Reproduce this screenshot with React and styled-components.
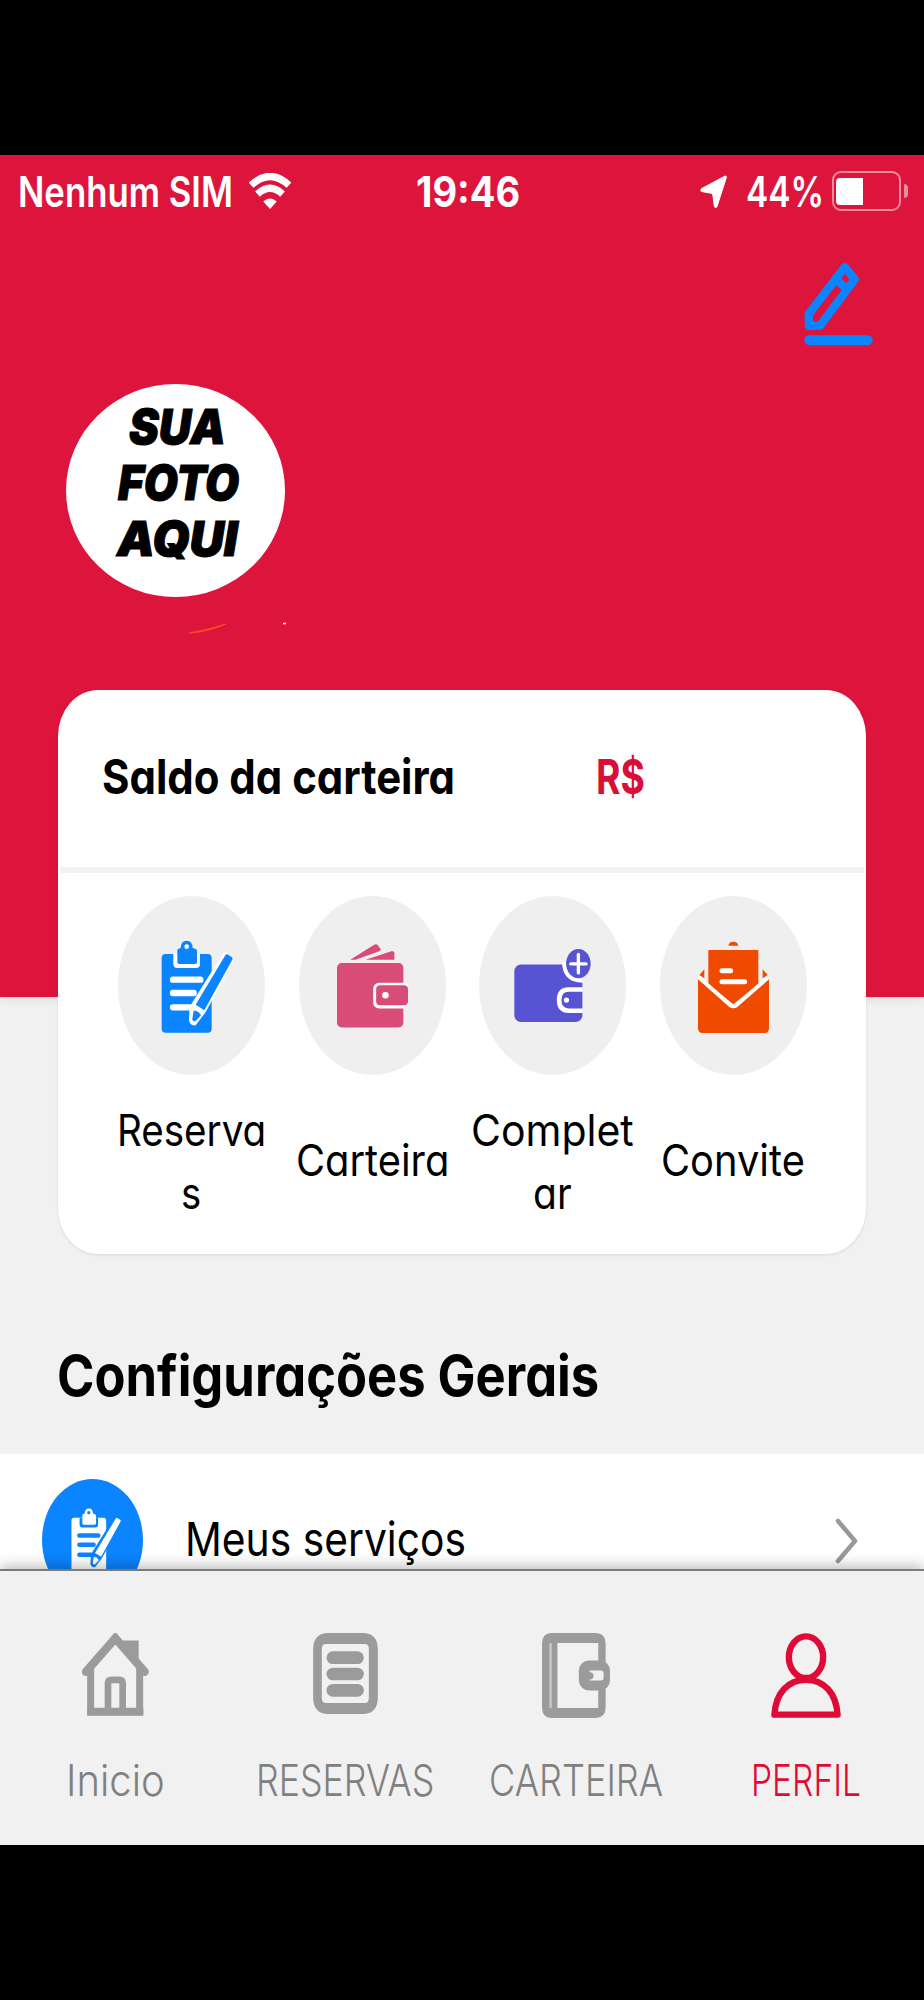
import React, { useLayoutEffect, useRef, useState } from 'react'
import styled, { createGlobalStyle } from 'styled-components'

const red = '#dd143c'
const grey = '#f1f1f1'
const blue = '#0a84ff'

const GlobalStyle = createGlobalStyle`
  body {
    margin: 0;
    background: #000;
    font-family: Inter, "Open Sans", sans-serif;
  }
`

const Screen = styled.div`
  display: flex;
  flex-direction: column;
  box-sizing: border-box;
  width: 924px;
  height: 2000px;
  padding: 155px 0;
  background-color: #000;
  overflow: hidden;
`

const Content = styled.main`
  flex: 1;
  min-height: 0;
  overflow: hidden;
  background-color: ${grey};
`

const Header = styled.header`
  box-sizing: border-box;
  height: 842px;
  background-color: ${red};
  box-shadow: 0 2px 8px rgba(0, 0, 0, 0.1);
`

const StatusBar = styled.div`
  display: grid;
  grid-template-columns: 398px 1fr 226px;
  align-items: center;
  height: 72px;
  padding: 0 16px 0 18px;
  color: #fff;
`

const StatusGroup = styled.div`
  display: flex;
  align-items: center;
  gap: ${({ gap }) => gap || 0}px;
`

const Battery = styled.div`
  display: flex;
  align-items: center;
  margin-left: 8px;
`

const BatteryBody = styled.div`
  box-sizing: border-box;
  width: 69px;
  height: 40px;
  padding: 4px 2px;
  border: 2px solid #f58a9f;
  border-radius: 9px;
`

const BatteryLevel = styled.div`
  width: 27px;
  height: 27px;
  margin-top: 1px;
  border-radius: 4px 0 0 4px;
  background-color: #fff;
`

const BatteryTip = styled.div`
  width: 4px;
  height: 14px;
  margin-left: 3px;
  border-radius: 0 5px 5px 0;
  background-color: #f58a9f;
`

const EditRow = styled.div`
  display: flex;
  justify-content: flex-end;
  padding: 35px 51px 0 0;
`

const Profile = styled.div`
  position: relative;
  padding: 38px 0 0 66px;
`

const Avatar = styled.div`
  display: flex;
  flex-direction: column;
  align-items: center;
  box-sizing: border-box;
  width: 219px;
  height: 213px;
  padding-top: 15px;
  border-radius: 50%;
  background-color: #fff;
  color: #000;
  -webkit-text-stroke: 1px #000;
`

const AvatarLine = styled.div`
  height: 56px;
  margin-left: ${({ shift }) => shift || 0}px;
`

const Specks = styled.svg`
  position: absolute;
  left: 0;
  top: 0;
  pointer-events: none;
`

const Card = styled.section`
  position: relative;
  box-sizing: border-box;
  width: 808px;
  height: 564px;
  margin: -307px auto 0;
  border-radius: 40px / 46px;
  background-color: #fff;
  box-shadow: 0 1px 3px rgba(0, 0, 0, 0.1);
`

const Balance = styled.div`
  display: flex;
  align-items: center;
  box-sizing: border-box;
  height: 183px;
  margin: 0 2px;
  padding: 0 0 3px 42px;
  border-bottom: 6px solid #f2f2f2;
`

const BalanceLabel = styled.div`
  width: 494px;
`

const Currency = styled.div`
  color: #d80f36;
`

const Actions = styled.div`
  display: grid;
  grid-template-columns: repeat(4, 180.7px);
  margin-left: 43px;
  padding-top: 23px;
`

const Action = styled.div`
  display: flex;
  flex-direction: column;
  align-items: center;
`

const ActionCircle = styled.div`
  display: flex;
  align-items: center;
  justify-content: center;
  width: 147px;
  height: 179px;
  border-radius: 50%;
  background-color: #efefef;
`

const IconShift = styled.div`
  display: flex;
  transform: translate(${({ x }) => x || 0}px, ${({ y }) => y || 0}px);
`

const ActionLabel = styled.div`
  display: flex;
  flex-direction: column;
  align-items: center;
  justify-content: center;
  box-sizing: border-box;
  height: 126px;
  margin-top: 24px;
  padding-bottom: ${({ single }) => (single ? 4 : 0)}px;
`

const SectionTitle = styled.h2`
  height: 70px;
  margin: 86px 0 0 57px;
  font-weight: normal;
`

const ServiceRow = styled.div`
  display: flex;
  align-items: flex-start;
  height: 200px;
  margin-top: 44px;
  background-color: #fff;
`

const ServiceCircle = styled.div`
  display: flex;
  align-items: center;
  justify-content: center;
  width: 101px;
  height: 122px;
  margin: 25px 42px 0;
  border-radius: 50%;
  background-color: ${blue};
`

const ServiceName = styled.div`
  flex: 1;
  margin-top: 50px;
`

const Chevron = styled.svg`
  margin: 64px 65px 0 0;
`

const TabBar = styled.nav`
  position: relative;
  display: grid;
  grid-template-columns: repeat(4, 1fr);
  box-sizing: border-box;
  height: 276px;
  padding-right: 3px;
  border-top: 2px solid #7b7b7b;
  background-color: ${grey};
  box-shadow: 0 -2px 14px rgba(0, 0, 0, 0.3);
`

const Tab = styled.div`
  display: flex;
  flex-direction: column;
  align-items: center;
  padding-top: 62px;
  color: ${({ active }) => (active ? '#df0a35' : '#808080')};
`

const TabIcon = styled.div`
  display: flex;
  align-items: flex-start;
  height: 85px;
  margin-bottom: 32px;
`

const TextBox = styled.span`
  display: block;
  width: ${({ width }) => width}px;
  height: ${({ line }) => line}px;
`

const TextRun = styled.span`
  display: inline-block;
  font-size: ${({ size }) => size}px;
  font-weight: ${({ weight }) => weight};
  font-style: ${({ italic }) => (italic ? 'italic' : 'normal')};
  font-feature-settings: ${({ round }) => (round ? '"cv11"' : 'normal')};
  line-height: ${({ line }) => line}px;
  white-space: nowrap;
  transform-origin: 0 50%;
`

// squeezes a run of text horizontally until it takes exactly `width`
const FitText = ({ children, width, size, line, weight = 400, italic = false, round = true }) => {
  const run = useRef(null)
  const [scale, setScale] = useState(1)

  useLayoutEffect(() => {
    setScale(width / run.current.offsetWidth)
  }, [children, width])

  return (
    <TextBox width={width} line={line}>
      <TextRun
        ref={run}
        size={size}
        line={line}
        weight={weight}
        italic={italic}
        round={round}
        style={{ transform: `scaleX(${scale})` }}
      >
        {children}
      </TextRun>
    </TextBox>
  )
}

const WifiIcon = () => (
  <svg width="42" height="36" viewBox="0 0 124 106" fill="none" stroke="#fff" strokeWidth="21">
    <path d="M6 36 Q62 -16 118 36" />
    <path d="M25 62 Q62 28 99 62" />
    <path d="M42 84 Q62 67 82 84 L62 106 Z" fill="#fff" stroke="none" />
  </svg>
)

const LocationIcon = () => (
  <svg width="27" height="33" viewBox="0 0 79 98">
    <path d="M4 41 L72 4 Q79 1 77 9 L50 93 Q46 100 42 92 L37 55 L5 49 Q0 46 4 41 Z" fill="#fff" stroke="#fff" strokeWidth="3" />
  </svg>
)

const EditIcon = () => (
  <svg width="69" height="84" viewBox="0 0 208 251" fill="none" stroke={blue} strokeWidth="25" strokeLinejoin="round">
    <path d="M123 14 L153 51 L49 190 L15 192 L14 156 Z" />
    <path d="M96 50 L131 82" />
    <path d="M16 235 H192" strokeWidth="30" strokeLinecap="round" />
  </svg>
)

const ClipboardIcon = ({ width, color, detail }) => (
  <svg width={width} height={width * 1.287} viewBox="0 0 216 278">
    <rect x="2" y="42" width="150" height="236" rx="12" fill={color} />
    <path d="M37 42 V72 Q37 84 49 84 H105 Q117 84 117 72 V42 Z" fill={detail} />
    <path d="M49 32 Q49 26 59 24 Q60 2 77 2 Q94 2 95 24 Q107 26 108 32 V66 Q108 72 102 72 H55 Q49 72 49 66 Z" fill={color} />
    <circle cx="77" cy="20" r="7" fill={detail} />
    <path d="M36 119 H118 M36 159 H98 M36 202 H86" stroke={detail} strokeWidth="19" strokeLinecap="round" />
    <path d="M190 34 L222 56 L134 216 L104 256 Q86 258 84 240 L86 200 Z" fill={detail} />
    <path d="M193 46 Q196 40 202 44 L212 51 Q217 55 213 61 L130 211 L104 194 Z" fill={color} />
    <path d="M98 212 L94 238 Q96 246 104 243 L120 226 Q114 212 98 212 Z" fill={color} />
  </svg>
)

const CashWalletIcon = () => (
  <svg width="71" height="85" viewBox="0 0 214 255" fill="#d94c78">
    <path d="M40 50 L112 5 Q118 2 122 5 L132 18 Q132 23 127 24 L56 50 Z" />
    <path d="M86 50 L164 24 Q171 23 173 29 V50 Z" />
    <rect y="60" width="200" height="194" rx="14" />
    <rect x="109" y="119" width="110" height="78" rx="18" fill="#fff" />
    <rect x="118" y="127" width="96" height="60" rx="12" />
    <circle cx="146" cy="157" r="10" fill="#fff" />
  </svg>
)

const AddWalletIcon = () => (
  <svg width="77" height="73" viewBox="0 0 230 220" fill="#5753d3">
    <rect y="47" width="205" height="173" rx="20" />
    <path d="M144 40 Q144 100 206 102 V40 Z" fill="#fff" />
    <path d="M154 30 Q156 84 206 91 V30 Z" fill="#efefef" />
    <ellipse cx="193" cy="44" rx="37" ry="44" />
    <path d="M193 16 V72 M170 45 H216" stroke="#fff" strokeWidth="10" strokeLinecap="round" />
    <path d="M206 122 H164 Q135 122 135 154 Q135 186 164 186 H206" fill="none" stroke="#fff" strokeWidth="14" />
    <circle cx="157" cy="154" r="8" fill="#fff" />
  </svg>
)

const InviteIcon = () => (
  <svg width="71" height="92" viewBox="0 0 213 276" fill="#f04a00">
    <path d="M91 14 Q93 2 106 2 Q119 2 121 14 Z" />
    <path d="M31 27 H181 V130 L106 190 L31 130 Z" />
    <path d="M4 102 L19 85 V112 Z M209 102 L194 85 V112 Z" />
    <path d="M0 112 L106 202 L213 112 V262 Q213 276 199 276 H14 Q0 276 0 262 Z" />
    <path d="M1 108 L96 192 Q106 199 116 192 L212 108" fill="none" stroke="#fff" strokeWidth="12" />
    <path d="M72 89 H98 M72 122 H140" stroke="#fff" strokeWidth="15" strokeLinecap="round" />
  </svg>
)

const HomeIcon = () => (
  <svg width="67" height="83" viewBox="0 0 201 248" fill="none" stroke="#9b9b9b">
    <path d="M12 116 L100 15 L188 116" strokeWidth="25" strokeLinecap="round" />
    <path d="M26 104 V236 H173 V104" strokeWidth="21" />
    <path d="M16 236 H184" strokeWidth="24" />
    <path d="M78 236 V150 Q78 140 88 140 H112 Q122 140 122 150 V236" strokeWidth="20" />
    <path d="M122 22 H170 V92 Z" fill="#9b9b9b" stroke="none" />
  </svg>
)

const ListIcon = () => (
  <svg width="65" height="81" viewBox="0 0 194 243" fill="#9b9b9b">
    <path
      fillRule="evenodd"
      d="M42 0 H152 Q194 2 194 50 V193 Q194 241 152 243 H42 Q0 241 0 193 V50 Q0 2 42 0 Z M38 33 Q26 33 26 47 V196 Q26 210 38 210 H155 Q167 210 167 196 V47 Q167 33 155 33 Z"
    />
    <rect x="40" y="55" width="112" height="38" rx="19" />
    <rect x="40" y="104" width="112" height="38" rx="19" />
    <rect x="40" y="153" width="112" height="38" rx="19" />
  </svg>
)

const WalletIcon = () => (
  <svg width="68" height="85" viewBox="0 0 203 254" fill="#9b9b9b">
    <path
      fillRule="evenodd"
      d="M26 0 H162 Q190 2 190 32 V222 Q190 252 162 254 H26 Q0 252 0 222 V32 Q0 2 26 0 Z M46 30 V224 H168 V30 Z"
    />
    <rect x="22" y="30" width="7" height="194" fill="#c9c9c9" />
    <rect x="110" y="82" width="93" height="90" rx="30" />
    <path d="M142 112 H176 Q184 112 184 120 V134 Q184 142 176 142 H142 Z" fill={grey} />
    <circle cx="143" cy="128" r="11" />
  </svg>
)

const UserIcon = () => (
  <svg width="70" height="85" viewBox="0 0 208 253" fill="none" stroke="#df0a35" strokeWidth="19">
    <ellipse cx="104" cy="72" rx="51" ry="62" />
    <path d="M10 243 C14 180 50 139 104 139 C158 139 194 180 198 243 Z" strokeLinejoin="round" />
  </svg>
)

const actions = [
  { lines: [['Reserva', 149], ['s', 20]], icon: <ClipboardIcon width={72} color={blue} detail="#fff" />, x: 6, y: 1 },
  { lines: [['Carteira', 153]], icon: <CashWalletIcon />, x: 0, y: 0 },
  { lines: [['Complet', 163], ['ar', 39]], icon: <AddWalletIcon />, x: 0, y: 0 },
  { lines: [['Convite', 144]], icon: <InviteIcon />, x: 0, y: 1 }
]

const tabs = [
  { label: 'Inicio', width: 99, icon: <HomeIcon /> },
  { label: 'RESERVAS', width: 178, icon: <ListIcon /> },
  { label: 'CARTEIRA', width: 174, icon: <WalletIcon /> },
  { label: 'PERFIL', width: 110, icon: <UserIcon />, active: true }
]

const App = () => (
  <Screen>
    <GlobalStyle />
    <Content>
      <Header>
        <StatusBar>
          <StatusGroup gap={16}>
            <FitText width={215} size={42} line={51} weight={600} round={false}>Nenhum SIM</FitText>
            <WifiIcon />
          </StatusGroup>
          <StatusGroup>
            <FitText width={104} size={42} line={51} weight={700} round={false}>19:46</FitText>
          </StatusGroup>
          <StatusGroup>
            <IconShift x={18}><LocationIcon /></IconShift>
            <IconShift x={37}>
              <FitText width={78} size={42} line={51} weight={600} round={false}>44%</FitText>
            </IconShift>
            <IconShift x={37}>
              <Battery>
                <BatteryBody><BatteryLevel /></BatteryBody>
                <BatteryTip />
              </Battery>
            </IconShift>
          </StatusGroup>
        </StatusBar>
        <EditRow><EditIcon /></EditRow>
        <Profile>
          <Avatar>
            <AvatarLine shift={4}><FitText width={97} size={48} line={56} weight={900} italic>SUA</FitText></AvatarLine>
            <AvatarLine shift={5}><FitText width={121} size={48} line={56} weight={900} italic>FOTO</FitText></AvatarLine>
            <AvatarLine shift={4}><FitText width={121} size={48} line={56} weight={900} italic>AQUI</FitText></AvatarLine>
          </Avatar>
          <Specks width="400" height="300">
            <path d="M189 287 Q208 286 226 278 Q212 282 204 284 Z" fill="#ff4a1c" stroke="#ff4a1c" />
            <path d="M283 277.5 H286" stroke="#fff" strokeWidth="1.5" />
          </Specks>
        </Profile>
      </Header>
      <Card>
        <Balance>
          <BalanceLabel><FitText width={353} size={48} line={60} weight={700}>Saldo da carteira</FitText></BalanceLabel>
          <Currency><FitText width={49} size={48} line={60} weight={700}>R$</FitText></Currency>
        </Balance>
        <Actions>
          {actions.map(({ lines, icon, x, y }) => (
            <Action key={lines[0][0]}>
              <ActionCircle><IconShift x={x} y={y}>{icon}</IconShift></ActionCircle>
              <ActionLabel single={lines.length === 1 ? 1 : 0}>
                {lines.map(([text, width]) => (
                  <FitText key={text} width={width} size={44} line={63}>{text}</FitText>
                ))}
              </ActionLabel>
            </Action>
          ))}
        </Actions>
      </Card>
      <SectionTitle>
        <FitText width={542} size={57} line={71} weight={700}>Configurações Gerais</FitText>
      </SectionTitle>
      <ServiceRow>
        <ServiceCircle>
          <IconShift x={3}><ClipboardIcon width={50} color="#fff" detail={blue} /></IconShift>
        </ServiceCircle>
        <ServiceName><FitText width={281} size={47} line={70}>Meus serviços</FitText></ServiceName>
        <Chevron width="24" height="46" viewBox="0 0 24 46" fill="none" stroke="#999" strokeWidth="4.5" strokeLinecap="round" strokeLinejoin="round">
          <path d="M3 3 L20 23 L3 43" />
        </Chevron>
      </ServiceRow>
    </Content>
    <TabBar>
      {tabs.map(({ label, width, icon, active }) => (
        <Tab key={label} active={active ? 1 : 0}>
          <TabIcon>{icon}</TabIcon>
          <FitText width={width} size={44} line={60} weight={300}>{label}</FitText>
        </Tab>
      ))}
    </TabBar>
  </Screen>
)

export default App
